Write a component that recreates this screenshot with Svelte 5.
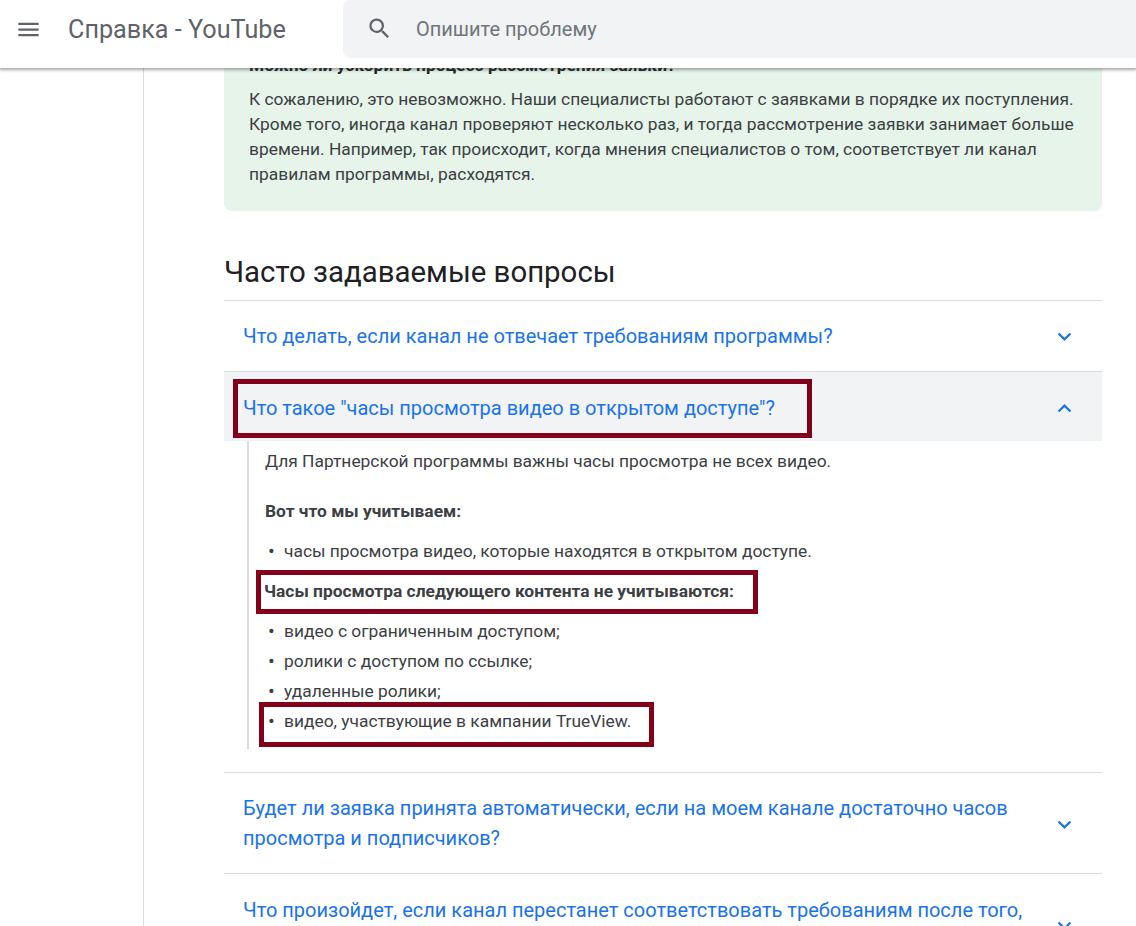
<script>
  const items = ['видео с ограниченным доступом;', 'ролики с доступом по ссылке;', 'удаленные ролики;', 'видео, участвующие в кампании TrueView.'];
</script>

<div class="page">
  <header class="top">
    <button class="menu" aria-label="Меню">
      <svg width="27" height="27" viewBox="0 0 24 24"><path d="M3 18h18v-2H3v2zm0-5h18v-2H3v2zm0-7v2h18V6H3z" fill="#5f6368"/></svg>
    </button>
    <div class="title">Справка - YouTube</div>
    <div class="search">
      <svg width="27" height="27" viewBox="0 0 24 24"><path d="M15.5 14h-.79l-.28-.27A6.47 6.47 0 0 0 16 9.5 6.5 6.5 0 1 0 9.5 16c1.61 0 3.09-.59 4.23-1.57l.27.28v.79l5 4.99L20.49 19l-4.99-5zm-6 0C7.01 14 5 11.99 5 9.5S7.01 5 9.5 5 14 7.01 14 9.5 11.99 14 9.5 14z" fill="#5f6368"/></svg>
      <span>Опишите проблему</span>
    </div>
  </header>

  <div class="body">
    <aside class="side"></aside>
    <main class="main">
      <section class="note">
        <h3>Можно ли ускорить процесс рассмотрения заявки?</h3>
        <p>К сожалению, это невозможно. Наши специалисты работают с заявками в порядке их поступления. Кроме того, иногда канал проверяют несколько раз, и тогда рассмотрение заявки занимает больше времени. Например, так происходит, когда мнения специалистов о том, соответствует ли канал правилам программы, расходятся.</p>
      </section>

      <h2>Часто задаваемые вопросы</h2>

      <div class="faq">
        <div class="row first-row">
          <span>Что делать, если канал не отвечает требованиям программы?</span>
          <svg class="chev" width="27" height="27" viewBox="0 0 24 24"><path d="M7.41 8.59 12 13.17l4.59-4.58L18 10l-6 6-6-6z" fill="#1a73e8"/></svg>
        </div>
        <div class="row open">
          <span class="marked">Что такое "часы просмотра видео в открытом доступе"?</span>
          <svg class="chev" width="27" height="27" viewBox="0 0 24 24"><path d="M7.41 15.41 12 10.83l4.59 4.58L18 14l-6-6-6 6z" fill="#1a73e8"/></svg>
        </div>
        <div class="answer">
          <div class="inner">
            <p class="intro">Для Партнерской программы важны часы просмотра не всех видео.</p>
            <p class="bold first">Вот что мы учитываем:</p>
            <ul class="one"><li>часы просмотра видео, которые находятся в открытом доступе.</li></ul>
            <p class="bold second"><span class="mark-b">Часы просмотра следующего контента не учитываются:</span></p>
            <ul>
              {#each items as item, i}
                <li class:mark-c={i === 3}>{item}</li>
              {/each}
            </ul>
          </div>
        </div>
        <div class="row tall">
          <span>Будет ли заявка принята автоматически, если на моем канале достаточно часов просмотра и подписчиков?</span>
          <svg class="chev" width="27" height="27" viewBox="0 0 24 24"><path d="M7.41 8.59 12 13.17l4.59-4.58L18 10l-6 6-6-6z" fill="#1a73e8"/></svg>
        </div>
        <div class="row tall">
          <span>Что произойдет, если канал перестанет соответствовать требованиям после того, как заявка будет принята?</span>
          <svg class="chev" width="27" height="27" viewBox="0 0 24 24"><path d="M7.41 8.59 12 13.17l4.59-4.58L18 10l-6 6-6-6z" fill="#1a73e8"/></svg>
        </div>
      </div>
    </main>
  </div>
</div>

<style>
  :global(body) { margin: 0; background: #fff; }
  .page { width: 1136px; height: 926px; overflow: hidden; font-family: Roboto, "Noto Sans", sans-serif; color: #3c4043; display: flex; flex-direction: column; }
  .top { height: 68px; flex: none; display: flex; align-items: center; background: #fff; box-shadow: 0 1px 3px 1px rgba(60,64,67,.45); position: relative; z-index: 2; }
  .menu { width: 27px; height: 27px; margin: -10px 0 0 15px; padding: 0; border: 0; background: none; display: flex; }
  .title { margin-left: 26px; font-size: 25.2px; color: #5f6368; width: 275px; white-space: nowrap; margin-top: -9px; }
  .search { width: 793px; height: 58px; margin-top: -10px; flex: none; background: #f1f3f4; border-radius: 8px 0 0 8px; display: flex; align-items: center; padding-left: 23px; box-sizing: border-box; gap: 23px; font-size: 20px; color: #70757a; }
  .search svg { margin-top: -2px; }
  .search span { margin-top: -1px; }
  .body { display: flex; flex: 1; min-height: 0; }
  .side { width: 143px; flex: none; border-right: 1px solid #dadce0; }
  .main { margin-left: 80px; width: 878px; flex: none; margin-top: -20px; }
  .note { background: #e6f4ea; border-radius: 8px; padding: 0 25px; height: 163px; overflow: hidden; }
  .note h3 { margin: 0; font-size: 17.39px; line-height: 25px; font-weight: 700; padding-top: 5px; color: #202124; white-space: nowrap; }
  .note p { margin: 9px 0 0; font-size: 17.39px; line-height: 25px; }
  h2 { margin: 43px 0 0; font-size: 29.4px; font-weight: 400; line-height: 36px; color: #202124; height: 46px; }
  .faq { border-top: 1px solid #dadce0; }
  .row { display: flex; justify-content: space-between; align-items: center; padding: 0 24px 0 19px; min-height: 70px; box-sizing: border-box; font-size: 20px; line-height: 30px; color: #1a73e8; border-bottom: 1px solid #dadce0; }
  .first-row { height: 71px; padding-bottom: 1px; }
  .row span { max-width: 790px; }
  .row.open { background: #f1f3f4; border-bottom: 0; position: relative; height: 69px; min-height: 0; padding-top: 2px; }
  .row.tall { height: 101px; }
  .row.tall:last-child { padding-top: 1px; }
  .chev { flex: none; margin-left: 20px; margin-top: 2px; }
  .marked { position: relative; }
  .marked::after { content: ""; position: absolute; left: -10px; top: -14px; width: 569px; height: 49px; border: 5px solid #82001a; }
  .answer { padding: 0 0 23px 23px; border-bottom: 1px solid #dadce0; }
  .inner { border-left: 2px solid #dadce0; padding: 8px 0 0 16px; height: 300px; font-size: 17.39px; line-height: 24px; }
  .inner p { margin: 0; }
  .bold { font-weight: 700; }
  .first { margin-top: 26px !important; }
  .second { margin-top: 16px !important; }
  ul { list-style: none; margin: 16px 0 0; padding: 0; }
  li { position: relative; padding-left: 19px; height: 30px; line-height: 24px; }
  li::before { content: "•"; position: absolute; left: 3px; font-size: 20px; }
  ul.one li { height: 24px; }
  .mark-b { position: relative; display: inline-block; margin-left: -1px; }
  .mark-b::after { content: ""; position: absolute; left: -8px; top: -9px; width: 492px; height: 34px; border: 5px solid #82001a; }
  .mark-c::after { content: ""; position: absolute; left: -6px; top: -7px; width: 385px; height: 35px; border: 5px solid #82001a; }
</style>
